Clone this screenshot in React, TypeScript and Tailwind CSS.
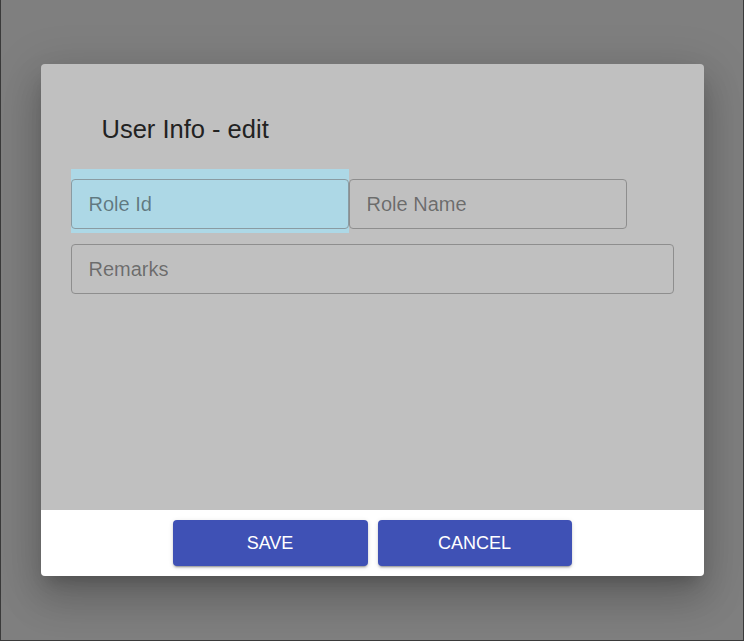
export default function App() {
  return (
    <div
      className="h-[641px] w-[744px] flex items-center justify-center bg-[#7f7f7f] border-l border-r border-b border-[#3a3a3a]"
      style={{ fontFamily: '"Liberation Sans", Arial, sans-serif' }}
    >
      <div className="w-[663px] rounded overflow-hidden shadow-[0_11px_15px_-7px_rgba(0,0,0,0.2),0_24px_38px_3px_rgba(0,0,0,0.14),0_9px_46px_8px_rgba(0,0,0,0.12)]">
        {/* body */}
        <div className="h-[446px] bg-[#c0c0c0] px-[30px] pt-[53px]">
          <h2 className="ml-[31px] text-[25.5px] leading-6 text-[#222]">User Info - edit</h2>
          <div className="mt-[28px] flex">
            <div className="w-[278px] bg-[#add8e6] pt-[10px] pb-[4px]">
              <input
                placeholder="Role Id"
                className="block w-full h-[50px] rounded border border-[#8a9ba2] bg-[#add8e6] px-[17px] text-[20px] text-[#222] placeholder:text-black/45 outline-none"
              />
            </div>
            <div className="pt-[10px]">
              <input
                placeholder="Role Name"
                className="block w-[278px] h-[50px] rounded border border-[#8e8e8e] bg-transparent px-[17px] text-[20px] text-[#222] placeholder:text-black/45 outline-none"
              />
            </div>
          </div>
          <input
            placeholder="Remarks"
            className="mt-[11px] block w-full h-[50px] rounded border border-[#8e8e8e] bg-transparent px-[17px] text-[20px] text-[#222] placeholder:text-black/45 outline-none"
          />
        </div>
        {/* footer */}
        <div className="h-[66px] bg-white flex items-center justify-center gap-[10px]">
          <button className="w-[195px] h-[46px] rounded bg-[#3f51b5] text-white text-[18px] font-medium shadow-[0_3px_1px_-2px_rgba(0,0,0,0.2),0_2px_2px_0_rgba(0,0,0,0.14),0_1px_5px_0_rgba(0,0,0,0.12)]">
            SAVE
          </button>
          <button className="w-[194px] h-[46px] rounded bg-[#3f51b5] text-white text-[18px] font-medium shadow-[0_3px_1px_-2px_rgba(0,0,0,0.2),0_2px_2px_0_rgba(0,0,0,0.14),0_1px_5px_0_rgba(0,0,0,0.12)]">
            CANCEL
          </button>
        </div>
      </div>
    </div>
  )
}
